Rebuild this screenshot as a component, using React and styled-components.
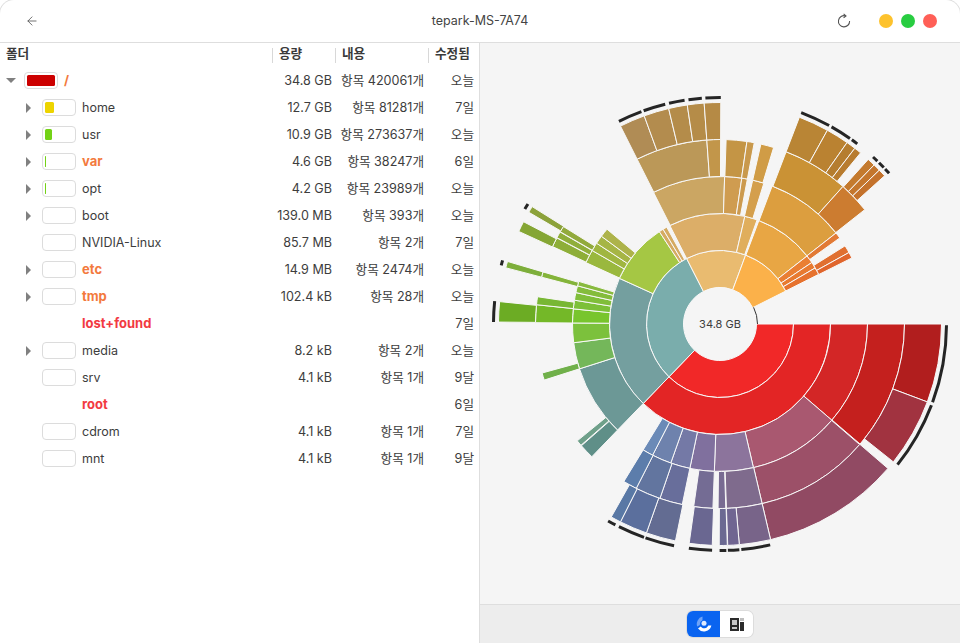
import React from "react"
import styled, { createGlobalStyle } from "styled-components"
import { ArrowLeft } from "lucide-react"

const fontStack = `Inter, "Noto Sans CJK KR", "Noto Sans", sans-serif`

const GlobalStyle = createGlobalStyle`
  html, body {
    margin: 0;
    padding: 0;
    background: #fff;
  }
  #root {
    height: 643px;
  }
`

const Window = styled.div`
  width: 960px;
  height: 643px;
  display: flex;
  flex-direction: column;
  overflow: hidden;
  border-radius: 14px 14px 0 0;
  box-shadow: 0 0 0 1px #dedede;
  background: #fff;
  font: 12.6px/1 ${fontStack};
  color: #3d3d3d;
`

const TitleBar = styled.header`
  height: 42px;
  flex: none;
  display: grid;
  grid-template-columns: 1fr auto 1fr;
  align-items: center;
  padding: 0 23px;
  border-bottom: 1px solid #dedede;
`

const IconButton = styled.div`
  width: 16px;
  height: 16px;
  display: flex;
  align-items: center;
  justify-content: center;
  color: #555;
`

const BackButton = styled(IconButton)`
  margin-left: 1px;
`

const Title = styled.div`
  font-size: 12.5px;
  color: #444;
`

const WindowControls = styled.div`
  display: flex;
  align-items: center;
  justify-content: flex-end;
  gap: 27px;
`

const Lights = styled.div`
  display: flex;
  gap: 8px;
`

const Light = styled.span`
  width: 14px;
  height: 14px;
  border-radius: 50%;
  background: ${(p) => p.$color};
`

const Body = styled.div`
  flex: 1;
  min-height: 0;
  display: flex;
`

const TreePane = styled.section`
  width: 479px;
  flex: none;
  border-right: 1px solid #dedede;
  background: #fff;
`

const rowColumns = "272px 63px 93px 51px"

const HeaderRow = styled.div`
  height: 24px;
  display: grid;
  grid-template-columns: ${rowColumns};
  align-items: center;
  font-weight: 600;
  font-size: 12.6px;
  color: #3a3a3a;
`

const HeaderCell = styled.div`
  height: 15px;
  box-sizing: border-box;
  display: flex;
  align-items: center;
  padding: 0 0 2px 6px;
  border-left: ${(p) => (p.$first ? "none" : "1px solid #d8d8d8")};
`

const Row = styled.div`
  height: 27px;
  display: grid;
  grid-template-columns: ${rowColumns};
  align-items: center;
`

const NameCell = styled.div`
  display: flex;
  align-items: center;
  padding-left: ${(p) => (p.$root ? 5 : 22)}px;
`

const Caret = styled.span`
  width: 12px;
  height: 10px;
  flex: none;
  margin-right: ${(p) => (p.$root ? 7 : 8)}px;
  display: flex;
  align-items: center;
  justify-content: center;

  &::before {
    content: "";
    display: ${(p) => (p.$hidden ? "none" : "block")};
    border-style: solid;
    border-color: transparent;
    ${(p) =>
      p.$open
        ? "border-width: 5px 5px 0 5px; border-top-color: #808080;"
        : "border-width: 5px 0 5px 5px; border-left-color: #808080;"}
  }
`

const UsageBox = styled.div`
  width: 34px;
  height: 17px;
  flex: none;
  box-sizing: border-box;
  padding: 2px;
  border: 1px solid ${(p) => (p.$hidden ? "transparent" : "#dcdcdc")};
  border-radius: 4px;
  background: #fff;
`

const UsageFill = styled.div`
  height: 100%;
  border-radius: 1.5px;
  background: ${(p) => p.$color};
`

const Name = styled.span`
  margin-left: 6px;
  padding-top: ${(p) => (p.$color ? 0 : 2)}px;
  font-size: ${(p) => (p.$color ? 13 : 12.5)}px;
  font-weight: ${(p) => (p.$color ? 700 : 400)};
  color: ${(p) => p.$color || "#3d3d3d"};
`

const ValueCell = styled.div`
  text-align: right;
  white-space: nowrap;
  padding: 2px ${(p) => p.$pad}px 0 0;
`

const ChartPane = styled.section`
  flex: 1;
  display: flex;
  flex-direction: column;
  min-width: 0;
  background: #f5f5f5;
`

const ChartArea = styled.div`
  flex: 1;
  min-height: 0;
  display: flex;
  align-items: center;
  justify-content: center;
`

const ChartLabel = styled.text`
  font: 11px ${fontStack};
  fill: #3d3d3d;
  text-anchor: middle;
`

const BottomBar = styled.footer`
  height: 38px;
  flex: none;
  display: flex;
  align-items: center;
  justify-content: center;
  border-top: 1px solid #dedede;
  background: #ededed;
`

const Toggle = styled.div`
  display: flex;
  overflow: hidden;
  border-radius: 6px;
  box-shadow: 0 0 0 1px #dcdcdc;
`

const ToggleButton = styled.div`
  width: 33px;
  height: 26px;
  display: flex;
  align-items: center;
  justify-content: center;
  background: ${(p) => (p.$active ? "#0a64f0" : "#fff")};
`

const ORANGE = "#f37a3e"
const RED = "#f23a42"

const rows = [
  { name: "home", size: "12.7 GB", items: "항목 81281개", date: "7일", fill: "#edd400", width: 9, arrow: true },
  { name: "usr", size: "10.9 GB", items: "항목 273637개", date: "오늘", fill: "#73d216", width: 7, arrow: true },
  { name: "var", size: "4.6 GB", items: "항목 38247개", date: "6일", fill: "#73d216", width: 1, arrow: true, color: ORANGE },
  { name: "opt", size: "4.2 GB", items: "항목 23989개", date: "오늘", fill: "#73d216", width: 1, arrow: true },
  { name: "boot", size: "139.0 MB", items: "항목 393개", date: "오늘", arrow: true },
  { name: "NVIDIA-Linux", size: "85.7 MB", items: "항목 2개", date: "7일" },
  { name: "etc", size: "14.9 MB", items: "항목 2474개", date: "오늘", arrow: true, color: ORANGE },
  { name: "tmp", size: "102.4 kB", items: "항목 28개", date: "오늘", arrow: true, color: ORANGE },
  { name: "lost+found", size: "", items: "", date: "7일", color: RED, noBox: true },
  { name: "media", size: "8.2 kB", items: "항목 2개", date: "오늘", arrow: true },
  { name: "srv", size: "4.1 kB", items: "항목 1개", date: "9달" },
  { name: "root", size: "", items: "", date: "6일", color: RED, noBox: true },
  { name: "cdrom", size: "4.1 kB", items: "항목 1개", date: "7일" },
  { name: "mnt", size: "4.1 kB", items: "항목 1개", date: "9달" },
]

// ring, start angle, end angle (degrees clockwise from east), colour
const segments = [
  [1, 0, 134, "#f12828"], [1, 134, 243, "#7aadac"], [1, 243, 290.4, "#e9bb70"], [1, 290.4, 333.4, "#fbb14a"],

  [2, 0, 134, "#e32525"], [2, 134, 204.4, "#749f9f"], [2, 204.4, 236.7, "#a5c744"],
  [2, 236.7, 239, "#d5ab62"], [2, 239, 241.2, "#d5ab62"],
  [2, 243, 283, "#dcae68"], [2, 283, 289.6, "#e0ae5c"],
  [2, 290.6, 322, "#e8a644"], [2, 322, 326.2, "#ea7f33"], [2, 326.2, 329.5, "#e87a30"], [2, 329.5, 333.3, "#e6722e"],

  [3, 0, 40.7, "#d32626"], [3, 40.7, 76.9, "#a95870"], [3, 76.9, 92.2, "#8c749c"],
  [3, 92.2, 101.8, "#80709e"], [3, 101.8, 109.5, "#7479a6"], [3, 109.5, 117.2, "#6e82ad"], [3, 117.2, 121.4, "#6b8ab7"],
  [3, 134, 162.3, "#6c9896"], [3, 162.3, 172.7, "#74b75a"], [3, 172.7, 180.4, "#7cc13c"],
  [3, 180.4, 185.9, "#78c52d"], [3, 185.9, 189.3, "#7cc038"], [3, 189.3, 192.3, "#80be3a"], [3, 192.3, 195, "#84bc3c"], [3, 195, 196.8, "#88ba3e"],
  [3, 204.6, 209.9, "#9ab83e"], [3, 209.9, 213.2, "#a0b640"], [3, 213.2, 216.5, "#a6b545"], [3, 216.5, 220, "#adb34a"],
  [3, 243.2, 271.8, "#cba663"], [3, 271.8, 278.5, "#cf9c50"], [3, 278.5, 280.7, "#cc9a4f"], [3, 282.8, 287.3, "#d49f4c"],
  [3, 290.7, 321.9, "#dc9e3f"], [3, 321.9, 324.3, "#e27a35"], [3, 328, 331, "#e06f30"], [3, 331, 333.4, "#e0652c"],

  [4, 0, 40.6, "#c4201e"], [4, 40.8, 76.8, "#9c5068"], [4, 76.8, 88, "#7f6b8d"], [4, 88.2, 90.6, "#786b92"],
  [4, 92.2, 98.2, "#746c94"], [4, 101.8, 109, "#686e9b"], [4, 109, 117, "#62759f"], [4, 117, 121.4, "#5c7dab"],
  [4, 134, 138.7, "#5f8f88"], [4, 138.9, 140.7, "#6fa08a"], [4, 162.3, 164.6, "#70b04a"],
  [4, 180.4, 186, "#74b828"], [4, 186, 188.5, "#78b734"], [4, 194.7, 196.4, "#84b43a"],
  [4, 204.8, 207.8, "#8eae38"], [4, 207.9, 209.9, "#90ae3a"], [4, 210, 211.9, "#92aa3c"],
  [4, 243.3, 265.9, "#bb9858"], [4, 265.9, 270.2, "#c2964a"], [4, 271.9, 278.4, "#c49545"], [4, 278.4, 280.7, "#c9994c"], [4, 282.8, 286.9, "#d09c46"],
  [4, 291, 311.8, "#ca9235"], [4, 311.8, 321.7, "#cc7c30"],

  [5, 0, 20.6, "#b11e1e"], [5, 20.6, 38.5, "#a13340"], [5, 40.7, 76.8, "#914a63"],
  [5, 76.8, 85, "#786489"], [5, 85, 88, "#706591"], [5, 88.1, 90.2, "#6b6992"], [5, 92, 98, "#6a6791"],
  [5, 101.6, 109.4, "#636c92"], [5, 109.4, 116.7, "#5b6f9d"], [5, 116.7, 119.4, "#5978a5"],
  [5, 180.5, 185.8, "#6cac24"], [5, 194.7, 196.4, "#7dae3a"], [5, 204.7, 207.5, "#85a634"], [5, 210.3, 212, "#8ca23a"],
  [5, 243.3, 250, "#b08c55"], [5, 250, 256.6, "#b38c4e"], [5, 256.6, 261.5, "#b48c4a"], [5, 261.5, 265.9, "#b58c48"], [5, 265.9, 270.2, "#b58a45"],
  [5, 291, 299, "#b98535"], [5, 299, 305, "#ba8231"], [5, 305, 307.5, "#b57d2f"], [5, 307.5, 309.4, "#b87c2f"],
  [5, 312, 314.1, "#c47a2e"], [5, 314.1, 316, "#c4762d"], [5, 316, 318, "#c4722c"],
]

// the dark marks round the rim, for folders too deep to draw
const rimMarks = [
  [0.3, 20.2], [21, 38.4], [77.2, 84.6], [85.1, 88], [88.4, 90.1], [92, 97.9], [101.7, 109.2], [109.6, 116.5], [117.5, 119.6],
  [180.5, 185.8], [195, 196.3], [210.5, 212],
  [243.5, 249.7], [250.3, 256], [257, 261], [262, 265.4], [266.3, 270.2],
  [291, 298.8], [299.5, 305], [305.6, 307.3], [312.5, 314], [314.6, 316.3], [316.8, 318.3],
]

const CX = 240
const CY = 280
const RING = 37
const HOLE = 36.5

const point = (r, deg) => {
  const a = (deg * Math.PI) / 180
  return `${(CX + r * Math.cos(a)).toFixed(2)} ${(CY + r * Math.sin(a)).toFixed(2)}`
}

const arcPath = (inner, outer, start, end) => {
  const large = end - start > 180 ? 1 : 0
  return `M${point(inner, start)} A${inner} ${inner} 0 ${large} 1 ${point(inner, end)} L${point(outer, end)} A${outer} ${outer} 0 ${large} 0 ${point(outer, start)} Z`
}

const rimPath = (r, start, end) =>
  `M${point(r, start)} A${r} ${r} 0 0 1 ${point(r, end)}`

const Sunburst = () => (
  <svg width="480" height="560" viewBox="0 0 480 560">
    {segments.map(([ring, start, end, color]) => (
      <path
        key={`${ring}-${start}`}
        d={arcPath(HOLE + (ring - 1) * RING, HOLE + ring * RING, start, end)}
        fill={color}
        stroke="#f8f8f8"
        strokeWidth="1"
      />
    ))}
    {rimMarks.map(([start, end]) => (
      <path key={start} d={rimPath(226.5, start, end)} fill="none" stroke="#252525" strokeWidth="3" />
    ))}
    <path d={rimPath(37.5, 333.6, 360)} fill="none" stroke="#333" strokeWidth="1" />
    <ChartLabel x={CX} y={CY + 4}>34.8 GB</ChartLabel>
  </svg>
)

const RingIcon = () => (
  <svg width="18" height="18" viewBox="0 0 18 18">
    <path d="M2.2 11.5A7.6 7.6 0 0 1 7.5 1.6V5.2A4.4 4.4 0 0 0 5 10Z" fill="#6fa3f7" />
    <path d="M16.4 10.6A7.6 7.6 0 0 1 3 13.4L5.7 11.6A4.4 4.4 0 0 0 13.2 10.6Z" fill="#fff" />
    <circle cx="9" cy="8.2" r="2.5" fill="#dfeafe" />
  </svg>
)

const ListIcon = () => (
  <svg width="16" height="16" viewBox="0 0 16 16">
    <path d="M1 2H10V15H1Z" fill="#2b2b2b" />
    <path d="M3 4H8V9H3Z" fill="#c9c9c9" />
    <path d="M3 11H8V13H3Z" fill="#c9c9c9" />
    <path d="M11 2H15V5H11Z" fill="#bdbdbd" />
    <path d="M11 6H15V15H11Z" fill="#2b2b2b" />
  </svg>
)

const RefreshIcon = () => (
  <svg width="16" height="16" viewBox="0 0 16 16" fill="none" stroke="#555" strokeWidth="1.1">
    <path d="M9.6 2.9A5.6 5.6 0 1 0 13.6 8" />
    <path d="M7.6 0.8L10 2.9L7.6 4.8" />
  </svg>
)

const App = () => (
  <>
    <GlobalStyle />
    <Window>
      <TitleBar>
        <BackButton>
          <ArrowLeft size={14} strokeWidth={1.4} />
        </BackButton>
        <Title>tepark-MS-7A74</Title>
        <WindowControls>
          <IconButton>
            <RefreshIcon />
          </IconButton>
          <Lights>
            <Light $color="#fdc22d" />
            <Light $color="#28cd41" />
            <Light $color="#ff5f57" />
          </Lights>
        </WindowControls>
      </TitleBar>
      <Body>
        <TreePane>
          <HeaderRow>
            <HeaderCell $first>폴더</HeaderCell>
            <HeaderCell>용량</HeaderCell>
            <HeaderCell>내용</HeaderCell>
            <HeaderCell>수정됨</HeaderCell>
          </HeaderRow>
          <Row>
            <NameCell $root>
              <Caret $open $root />
              <UsageBox>
                <UsageFill $color="#cc0000" />
              </UsageBox>
              <Name $color={ORANGE}>/</Name>
            </NameCell>
            <ValueCell $pad={3}>34.8 GB</ValueCell>
            <ValueCell $pad={4}>항목 420061개</ValueCell>
            <ValueCell $pad={5}>오늘</ValueCell>
          </Row>
          {rows.map((row) => (
            <Row key={row.name}>
              <NameCell>
                <Caret $hidden={!row.arrow} />
                <UsageBox $hidden={row.noBox}>
                  {row.fill && <UsageFill $color={row.fill} style={{ width: row.width }} />}
                </UsageBox>
                <Name $color={row.color}>{row.name}</Name>
              </NameCell>
              <ValueCell $pad={3}>{row.size}</ValueCell>
              <ValueCell $pad={4}>{row.items}</ValueCell>
              <ValueCell $pad={5}>{row.date}</ValueCell>
            </Row>
          ))}
        </TreePane>
        <ChartPane>
          <ChartArea>
            <Sunburst />
          </ChartArea>
          <BottomBar>
            <Toggle>
              <ToggleButton $active>
                <RingIcon />
              </ToggleButton>
              <ToggleButton>
                <ListIcon />
              </ToggleButton>
            </Toggle>
          </BottomBar>
        </ChartPane>
      </Body>
    </Window>
  </>
)

export default App
